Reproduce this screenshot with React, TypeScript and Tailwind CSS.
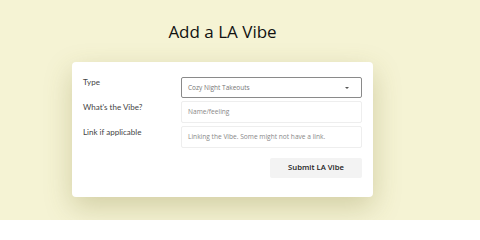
import React from "react";

export default function App() {
  return (
    <div
      className="w-[480px] h-[220px] bg-[#f5f3d4] overflow-hidden"
      style={{ fontFamily: '"Open Sans", "Noto Sans", sans-serif' }}
    >
      <div className="w-[445px] flex flex-col items-center">
        <h1 className="mt-[20px] text-[17px] leading-[23px] text-[#111] font-normal">Add a LA Vibe</h1>
        <div className="mt-[19px] w-[301px] bg-white rounded-[4px] shadow-[0_10px_28px_rgba(120,110,40,0.28)] pt-[15px] pb-[19px] px-[11px] flex flex-col">
          <div className="flex">
            <div className="w-[98px] text-[8px] leading-[11px] text-[#444] font-['Lato',sans-serif]">Type</div>
            <div className="flex-1 h-[21px] border border-[#8a8a8a] rounded-[2px] flex items-center justify-between pl-[6px] pr-[12px]">
              <span className="text-[6.5px] text-[#777]">Cozy Night Takeouts</span>
              <svg width="4" height="2" viewBox="0 0 4 2">
                <path d="M0 0 L4 0 L2 2 Z" fill="#555" />
              </svg>
            </div>
          </div>
          <div className="flex mt-[3px]">
            <div className="w-[98px] text-[8px] leading-[11px] text-[#444] pt-[1px] font-['Lato',sans-serif]">What's the Vibe?</div>
            <div className="flex-1 h-[22px] border border-[#eee] rounded-[2px] flex items-center pl-[6px]">
              <span className="text-[6.6px] text-[#888]">Name/feeling</span>
            </div>
          </div>
          <div className="flex mt-[3px]">
            <div className="w-[98px] text-[8px] leading-[11px] text-[#444] pt-[1px] font-['Lato',sans-serif]">Link if applicable</div>
            <div className="flex-1 h-[22px] border border-[#eee] rounded-[2px] flex items-center pl-[6px]">
              <span className="text-[6.6px] text-[#888]">Linking the Vibe. Some might not have a link.</span>
            </div>
          </div>
          <div className="flex justify-end mt-[10px]">
            <button className="w-[92px] h-[20px] bg-[#f3f3f3] rounded-[2px] text-[7.7px] font-semibold text-[#222]">
              Submit LA Vibe
            </button>
          </div>
        </div>
      </div>
    </div>
  );
}
